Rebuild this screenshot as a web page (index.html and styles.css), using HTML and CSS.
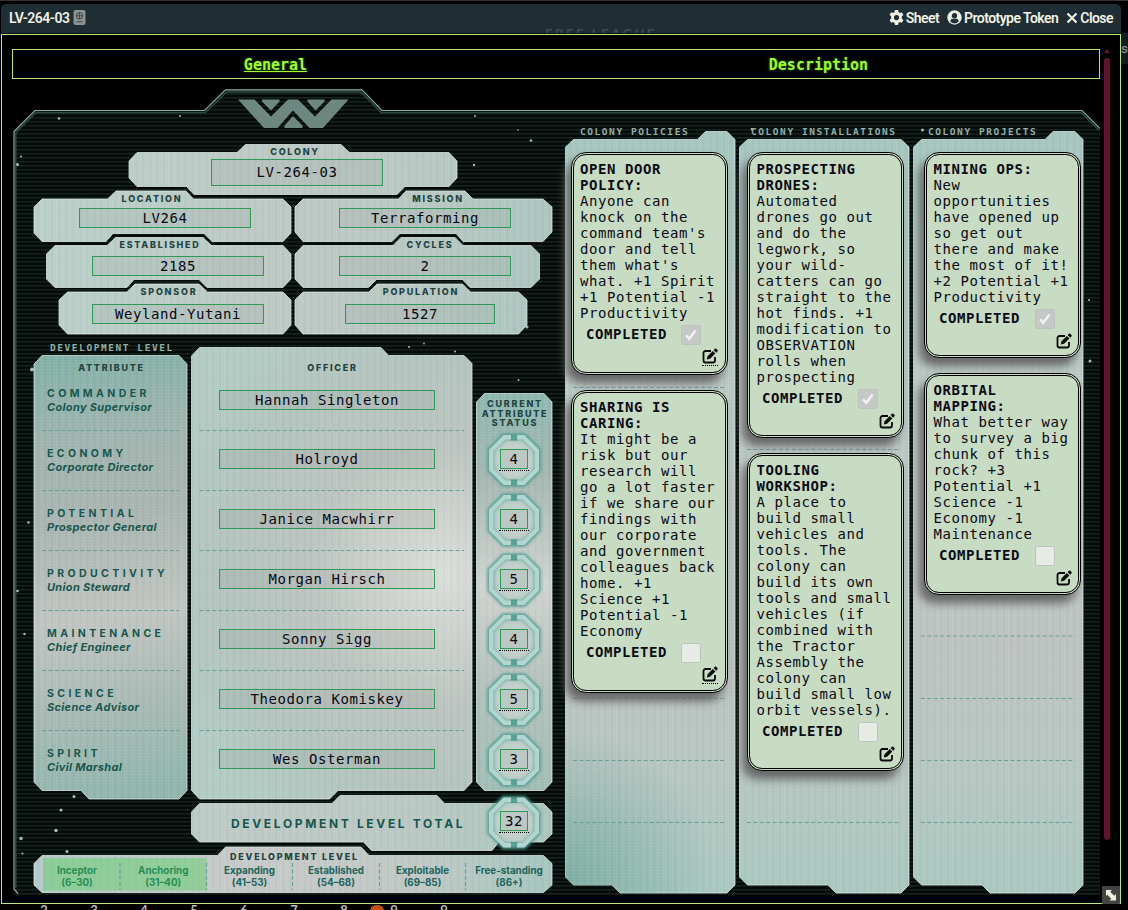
FILE: index.html
```html
<!DOCTYPE html>
<html lang="en">
<head>
<meta charset="utf-8">
<title>LV-264-03</title>
<link rel="stylesheet" href="styles.css">
</head>
<body>
<div class="desktop">
<div class="window">
  <header class="titlebar">
    <span class="title">LV-264-03</span>
    <svg class="passport" viewBox="0 0 12 15" width="13" height="15"><rect width="12" height="15" rx="2" fill="#8d9490"/><g fill="none" stroke="#37434a" stroke-width=".9"><circle cx="6" cy="5.8" r="3.2"/><path d="M2.8 5.8h6.4M6 2.6v6.4M3 11.8h6"/></g></svg>
    <span class="ghost">FREE LEAGUE</span>
    <nav class="controls">
      <span><svg viewBox="0 0 16 16" width="15" height="15"><path fill="#f0f0e0" fill-rule="evenodd" d="M6.3 0h3.4l.4 2.2 1.5.9 2.1-.8 1.7 3-1.7 1.4v2.6l1.7 1.4-1.7 3-2.1-.8-1.5.9-.4 2.2H6.300l-.4-2.2-1.500-.9-2.100.8-1.700-3 1.700-1.400V6.700L.6 5.300l1.700-3 2.100.8 1.500-.9zM8 5.200a2.800 2.800 0 1 0 0 5.600 2.800 2.800 0 0 0 0-5.600z"/></svg>Sheet</span>
      <span><svg viewBox="0 0 16 16" width="15" height="15"><circle cx="8" cy="8" r="7.700" fill="#f0f0e0"/><circle cx="8" cy="6" r="2.800" fill="#1f2d35"/><path d="M3.500 12.300a4.500 3.300 0 0 1 9 0 6 6 0 0 1-9 0z" fill="#1f2d35"/></svg>Prototype Token</span>
      <span><svg viewBox="0 0 12 12" width="12" height="12"><path d="M1.500 1.500l9 9M10.500 1.500l-9 9" stroke="#f0f0e0" stroke-width="2.200"/></svg>Close</span>
    </nav>
  </header>
  <main class="body">
    <div class="scroller">
      <nav class="tabs"><a class="tab active">General</a><a class="tab">Description</a></nav>
      <div class="sheet">
        <svg class="art" viewBox="12 89 1088 806" width="1088" height="806">
          <defs>
            <filter id="glow" x="-50%" y="-50%" width="200%" height="200%"><feGaussianBlur stdDeviation="1.8"/></filter>
            <pattern id="scan" width="8" height="4" patternUnits="userSpaceOnUse"><rect width="8" height="4" fill="#040a08"/><rect y="1" width="8" height="1.500" fill="#15231f"/></pattern>
            <pattern id="weave" width="7" height="3" patternUnits="userSpaceOnUse"><rect width="1" height="3" fill="#fff" opacity=".07"/><rect x="3" width="1" height="3" fill="#245a50" opacity=".04"/><rect x="5" width="1" height="3" fill="#fff" opacity=".05"/><rect width="7" height="1" fill="#fff" opacity=".04"/></pattern>
            <linearGradient id="gFields" gradientUnits="userSpaceOnUse" x1="34" y1="0" x2="552" y2="0"><stop offset="0" stop-color="#b9cfc9"/><stop offset=".45" stop-color="#bcc8c4"/><stop offset=".75" stop-color="#b8c7c2"/><stop offset="1" stop-color="#aac5be"/></linearGradient>
            <linearGradient id="gAttr" gradientUnits="userSpaceOnUse" x1="34" y1="355" x2="100" y2="799"><stop offset="0" stop-color="#7fb0a6"/><stop offset=".2" stop-color="#9fb3ae"/><stop offset=".38" stop-color="#a9b4b0"/><stop offset=".6" stop-color="#c0c4c0"/><stop offset=".8" stop-color="#a8b9b4"/><stop offset="1" stop-color="#8fb5ac"/></linearGradient>
            <radialGradient id="gOff" gradientUnits="userSpaceOnUse" cx="440" cy="575" r="290"><stop offset="0" stop-color="#dbddd9"/><stop offset=".45" stop-color="#bbc3bf"/><stop offset=".75" stop-color="#b3c3be"/><stop offset="1" stop-color="#b1cac3"/></radialGradient>
            <linearGradient id="gStat" gradientUnits="userSpaceOnUse" x1="0" y1="393" x2="0" y2="790"><stop offset="0" stop-color="#8cb8af"/><stop offset=".2" stop-color="#a3b5b0"/><stop offset=".48" stop-color="#cfd2ce"/><stop offset=".75" stop-color="#b3c0bb"/><stop offset="1" stop-color="#9fbdb5"/></linearGradient>
            <linearGradient id="gLevel" gradientUnits="userSpaceOnUse" x1="34" y1="0" x2="552" y2="0"><stop offset="0" stop-color="#b5c8c8"/><stop offset=".4" stop-color="#c6c9c8"/><stop offset=".75" stop-color="#bec7c4"/><stop offset="1" stop-color="#a3c5bd"/></linearGradient>
            <linearGradient id="gCols" gradientUnits="userSpaceOnUse" x1="0" y1="131" x2="0" y2="893"><stop offset="0" stop-color="#a3c5bd"/><stop offset=".3" stop-color="#bac9c5"/><stop offset=".68" stop-color="#bcc2bf"/><stop offset=".85" stop-color="#b6c6c1"/><stop offset="1" stop-color="#a8c7bf"/></linearGradient>
            <radialGradient id="gCorner" gradientUnits="userSpaceOnUse" cx="565" cy="880" r="150"><stop offset="0" stop-color="#5f9c90" stop-opacity=".6"/><stop offset="1" stop-color="#5f9c90" stop-opacity="0"/></radialGradient>
            <radialGradient id="gDial"><stop offset="0" stop-color="#c6d1cd"/><stop offset=".7" stop-color="#c2d0cb"/><stop offset="1" stop-color="#9fc3bb"/></radialGradient>
            <g id="fields">
              <polygon points="129,161 137,152.500 237,152.500 245.500,144.500 341,144.500 349.500,152.500 449,152.500 457,161 457,178 449,186.500 405,186.500 397,194.500 194,194.500 186.500,186.500 137,186.500 129,178"/>
              <polygon points="34,207 42,199 107.500,199 116,191 186,191 193.500,199 283,199 291,207 291,233 283,241.500 212,241.500 204,233.500 113,233.500 106,241.500 42,241.500 34,233"/>
              <polygon points="295,207 303,199 398.500,199 406,191 465,191 473,199 543,199 552,207 552,232 543,241.500 463,241.500 456,233.500 400,233.500 392,241.500 303,241.500 295,232"/>
              <polygon points="46.500,254 55,245.500 107,245.500 115.500,237.500 203,237.500 211.500,245.500 283,245.500 291,254 291,279 283,287.500 207,287.500 199,279.500 134,279.500 127,287.500 55,287.500 46.500,279"/>
              <polygon points="295,254 303,245.500 393,245.500 401,237.500 455,237.500 463,245.500 531,245.500 539.500,254 539.500,279 531,287.500 470,287.500 462.500,279.500 376.500,279.500 368.500,287.500 303,287.500 295,279"/>
              <polygon points="59,300 67.500,292 127,292 135,284 199,284 207.500,292 283,292 291,300 291,325 283,334 67.500,334 59,325"/>
              <polygon points="295,300 303,292 369,292 377,284 462.500,284 470.500,292 518.500,292 527,300 527,325 518.500,334 303,334 295,325"/>
            </g>
            <polygon id="attr" points="34,364 42,355.500 179,355.500 187,364 187,790.500 179,799 89,799 81,790.500 42,790.500 34,782"/>
            <polygon id="off" points="191.500,356 199.500,347.500 381,347.500 388.500,355.500 464,355.500 472,363.500 472,782 464,790.500 338,790.500 329.500,799 199.500,799 191.500,790.500"/>
            <polygon id="stat" points="476.500,402 484.500,393.500 544,393.500 552,402 552,782 544,790.500 484.500,790.500 476.500,782"/>
            <polygon id="total" points="191.500,812 199.500,803.500 332,803.500 340,795.500 437,795.500 444.500,803.500 543.500,803.500 552,812 552,834 543.500,842 499,842 492,850.500 371.500,850.500 363.500,842 199.500,842 191.500,834"/>
            <polygon id="level" points="34,863.500 42,855.500 217.500,855.500 225.500,847 361,847 369,855.500 543.500,855.500 552,863.500 552,885 543.500,892.500 42,892.500 34,885"/>
            <g id="cols">
              <polygon points="565.500,147 573.500,139.500 697.500,139.500 705.500,131.500 727,131.500 735,139.500 735,885 727,893 620,893 612,885 573.500,885 565.500,877"/>
              <polygon points="739.500,147 747.500,139.500 901,139.500 909,147 909,885 901,893 836,893 828,885 747.500,885 739.500,877"/>
              <polygon points="913.500,147 921.500,139.500 1045,139.500 1053,131.500 1075,131.500 1083,139.500 1083,885 1075,893 990,893 982,885 921.500,885 913.500,877"/>
            </g>
            <g id="dial">
              <polygon points="-10,-23.500 10,-23.500 23.500,-10 23.500,10 10,23.500 -10,23.500 -23.500,10 -23.500,-10" fill="url(#gDial)" stroke="#4f9c90" stroke-width="6" filter="url(#glow)"/>
              <path d="M-4,-20.500H4M-4,20.500H4" stroke="#4f9c90" stroke-width="2"/>
              <path d="M-3,-22.800H-9.500L-22.800,-9.500V9.500L-9.500,22.800H-3M3,-22.800H9.500L22.800,-9.500V9.500L9.500,22.800H3" fill="none" stroke="#b1d6cf" stroke-width="4.400"/>
            </g>
          </defs>
          <polygon points="14,895 14,131.500 35,110.500 204.500,110.500 225.500,89.500 362,89.500 382,110.500 1082,110.500 1100,128.500 1100,895" fill="url(#scan)"/>
          <path d="M18,893.500L14,889V131.500L35,110.500H204.500L225.500,89.800H362L382,110.500H1082L1100,128.500" fill="none" stroke="#86aaa2" stroke-width="1.200"/>
          <path d="M15.800,888V132.500L36,112.500H205.500L226.500,92H361L381,112.500H1081L1099,130.500" fill="none" stroke="#2f4a44" stroke-width="1.500"/>
          <g fill="#6d8881">
            <path d="M238,99.500H254.500L271,116.500L288,99.500H298L315,116.500L331.500,99.500H348.500L323,128H309.500L293,110.500L277.500,128H264Z"/>
            <path d="M262,99.500H279.500V101.500L271,110.500L262,101.500ZM307.500,99.500H324.500V101.500L315.500,110.500L307.500,101.500ZM293,116L302.500,125.500V128H284.500V125.500Z"/>
          </g>
          <g fill="#a9bdb8"><circle cx="59" cy="118.500" r="1.300"/><circle cx="180" cy="116" r="1"/><circle cx="21" cy="156.500" r="1"/><circle cx="17.500" cy="164.500" r="1.500"/><circle cx="531" cy="140.500" r="1.300"/><circle cx="474" cy="165" r="1.200"/><circle cx="518" cy="130" r=".8"/><circle cx="475" cy="116" r="1"/><circle cx="527" cy="327" r="1.500"/><circle cx="409" cy="347" r="1"/><circle cx="455" cy="351.500" r="1"/><circle cx="424" cy="343.500" r=".9"/><circle cx="518.500" cy="380" r="1"/><circle cx="32" cy="369.500" r="2"/><circle cx="28.500" cy="522.500" r="1.200"/><circle cx="17.500" cy="591" r="1.300"/><circle cx="24.500" cy="634" r="1.200"/><circle cx="74" cy="796.500" r="1.500"/><circle cx="61" cy="810" r="1.500"/><circle cx="56" cy="830.500" r="1.700"/><circle cx="21" cy="838.500" r="1.700"/><circle cx="67" cy="851.500" r="1.500"/><circle cx="22.500" cy="853.500" r="1"/><circle cx="1090" cy="361" r="1.500"/><circle cx="1089" cy="300" r="1"/><circle cx="922.500" cy="130" r="1.500"/><circle cx="752" cy="129" r="1.300"/></g>
          <g stroke="#dcebe7" stroke-opacity=".75" stroke-width="1">
            <use href="#fields" fill="url(#gFields)"/><use href="#attr" fill="url(#gAttr)"/><use href="#off" fill="url(#gOff)"/><use href="#stat" fill="url(#gStat)"/><use href="#total" fill="url(#gFields)"/><use href="#level" fill="url(#gLevel)"/><use href="#cols" fill="url(#gCols)"/>
          </g>
          <use href="#cols" fill="url(#gCorner)"/>
          <g fill="url(#weave)"><use href="#fields"/><use href="#attr"/><use href="#off"/><use href="#stat"/><use href="#total"/><use href="#level"/><use href="#cols"/></g>
          <rect x="43" y="858" width="163.500" height="32.500" fill="#5fd06a" opacity=".5"/>
          <g stroke="#66a098" stroke-width="1.200" stroke-dasharray="4 2.400" fill="none">
            <path d="M42,430.500H179M42,490.500H179M42,550.500H179M42,610.500H179M42,670.500H179M42,730.500H179"/>
            <path d="M199.500,430.500H464M199.500,490.500H464M199.500,550.500H464M199.500,610.500H464M199.500,670.500H464M199.500,730.500H464"/>
            <path d="M573,387.500H726M573,698.500H726M573,760.500H726M573,822.500H726M747,449.500H901M747,822.500H901M921,636H1075M921,698.500H1075M921,760.500H1075M921,822.500H1075"/>
            <path d="M120,863V890M206.500,863V890M292.500,863V890M379.500,863V890M465.500,863V890"/>
          </g>
          <use href="#dial" x="514" y="460"/><use href="#dial" x="514" y="520"/><use href="#dial" x="514" y="580"/><use href="#dial" x="514" y="640"/><use href="#dial" x="514" y="700"/><use href="#dial" x="514" y="760"/><use href="#dial" x="514" y="822.500"/>
        </svg>
        <div class="content">
          <section class="left">
            <div class="field colony"><label>COLONY</label><div class="input">LV-264-03</div></div>
            <div class="pair">
              <div class="field location"><label>LOCATION</label><div class="input">LV264</div></div>
              <div class="field mission"><label>MISSION</label><div class="input">Terraforming</div></div>
            </div>
            <div class="pair">
              <div class="field established"><label>ESTABLISHED</label><div class="input">2185</div></div>
              <div class="field cycles"><label>CYCLES</label><div class="input">2</div></div>
            </div>
            <div class="pair last">
              <div class="field sponsor"><label>SPONSOR</label><div class="input">Weyland-Yutani</div></div>
              <div class="field population"><label>POPULATION</label><div class="input">1527</div></div>
            </div>
            <h3 class="dev-title">DEVELOPMENT LEVEL</h3>
            <div class="board">
              <div class="attributes">
                <h4>ATTRIBUTE</h4>
                <div class="attribute"><b>COMMANDER</b><i>Colony Supervisor</i></div>
                <div class="attribute"><b>ECONOMY</b><i>Corporate Director</i></div>
                <div class="attribute"><b>POTENTIAL</b><i>Prospector General</i></div>
                <div class="attribute"><b>PRODUCTIVITY</b><i>Union Steward</i></div>
                <div class="attribute"><b>MAINTENANCE</b><i>Chief Engineer</i></div>
                <div class="attribute"><b>SCIENCE</b><i>Science Advisor</i></div>
                <div class="attribute"><b>SPIRIT</b><i>Civil Marshal</i></div>
              </div>
              <div class="officers">
                <h4>OFFICER</h4>
                <div class="input">Hannah Singleton</div><div class="input">Holroyd</div><div class="input">Janice Macwhirr</div><div class="input">Morgan Hirsch</div><div class="input">Sonny Sigg</div><div class="input">Theodora Komiskey</div><div class="input">Wes Osterman</div>
              </div>
              <div class="statuses">
                <h4>CURRENT<br>ATTRIBUTE<br>STATUS</h4>
                <div class="score"><div class="input">4</div></div><div class="score"><div class="input">4</div></div><div class="score"><div class="input">5</div></div><div class="score"><div class="input">4</div></div><div class="score"><div class="input">5</div></div><div class="score"><div class="input">3</div></div>
              </div>
            </div>
            <div class="total"><b>DEVELOPMENT LEVEL TOTAL</b><div class="score"><div class="input">32</div></div></div>
            <h4 class="level-title">DEVELOPMENT LEVEL</h4>
            <div class="levels">
              <span class="on first">Inceptor<br>(6–30)</span><span class="on">Anchoring<br>(31–40)</span><span>Expanding<br>(41–53)</span><span>Established<br>(54–68)</span><span>Exploitable<br>(69–85)</span><span>Free-standing<br>(86+)</span>
            </div>
          </section>
          <section class="column">
            <h3>COLONY POLICIES</h3>
            <article class="card dotted">
              <p><b>OPEN DOOR<br>POLICY:</b><br>Anyone can<br>knock on the<br>command team's<br>door and tell<br>them what's<br>what. +1 Spirit<br>+1 Potential -1<br>Productivity</p>
              <div class="done"><b>COMPLETED</b><span class="check on"><svg viewBox="0 0 20 20"><path d="M4.500 10.500l3.500 3.700L15 5"/></svg></span></div>
              <svg class="edit" viewBox="0 0 16 16"><path d="M9 3H3.500A2 2 0 0 0 1.500 5v7.500a2 2 0 0 0 2 2H11a2 2 0 0 0 2-2V9"/><path class="nib" d="M5.500 8.200l5.300-5.300 2.600 2.600-5.300 5.300-3.300.8zM11.600 2.100L13 .7q.7-.5 1.400.1l1.100 1.100q.6.700 0 1.400l-1.300 1.400z"/></svg>
            </article>
            <article class="card dotted">
              <p><b>SHARING IS<br>CARING:</b><br>It might be a<br>risk but our<br>research will<br>go a lot faster<br>if we share our<br>findings with<br>our corporate<br>and government<br>colleagues back<br>home. +1<br>Science +1<br>Potential -1<br>Economy</p>
              <div class="done"><b>COMPLETED</b><span class="check"></span></div>
              <svg class="edit" viewBox="0 0 16 16"><path d="M9 3H3.500A2 2 0 0 0 1.500 5v7.500a2 2 0 0 0 2 2H11a2 2 0 0 0 2-2V9"/><path class="nib" d="M5.500 8.200l5.300-5.300 2.600 2.600-5.300 5.300-3.300.8zM11.600 2.100L13 .7q.7-.5 1.400.1l1.100 1.100q.6.700 0 1.400l-1.300 1.400z"/></svg>
            </article>
          </section>
          <section class="column installations">
            <h3>COLONY INSTALLATIONS</h3>
            <article class="card">
              <p><b>PROSPECTING<br>DRONES:</b><br>Automated<br>drones go out<br>and do the<br>legwork, so<br>your wild-<br>catters can go<br>straight to the<br>hot finds. +1<br>modification to<br>OBSERVATION<br>rolls when<br>prospecting</p>
              <div class="done"><b>COMPLETED</b><span class="check on"><svg viewBox="0 0 20 20"><path d="M4.500 10.500l3.500 3.700L15 5"/></svg></span></div>
              <svg class="edit" viewBox="0 0 16 16"><path d="M9 3H3.500A2 2 0 0 0 1.500 5v7.500a2 2 0 0 0 2 2H11a2 2 0 0 0 2-2V9"/><path class="nib" d="M5.500 8.200l5.300-5.300 2.600 2.600-5.300 5.300-3.300.8zM11.600 2.100L13 .7q.7-.5 1.400.1l1.100 1.100q.6.700 0 1.400l-1.300 1.400z"/></svg>
            </article>
            <article class="card">
              <p><b>TOOLING<br>WORKSHOP:</b><br>A place to<br>build small<br>vehicles and<br>tools. The<br>colony can<br>build its own<br>tools and small<br>vehicles (if<br>combined with<br>the Tractor<br>Assembly the<br>colony can<br>build small low<br>orbit vessels).</p>
              <div class="done"><b>COMPLETED</b><span class="check"></span></div>
              <svg class="edit" viewBox="0 0 16 16"><path d="M9 3H3.500A2 2 0 0 0 1.500 5v7.500a2 2 0 0 0 2 2H11a2 2 0 0 0 2-2V9"/><path class="nib" d="M5.500 8.200l5.300-5.300 2.600 2.600-5.300 5.300-3.300.8zM11.600 2.100L13 .7q.7-.5 1.400.1l1.100 1.100q.6.700 0 1.400l-1.300 1.400z"/></svg>
            </article>
          </section>
          <section class="column projects">
            <h3>COLONY PROJECTS</h3>
            <article class="card">
              <p><b>MINING OPS:</b><br>New<br>opportunities<br>have opened up<br>so get out<br>there and make<br>the most of it!<br>+2 Potential +1<br>Productivity</p>
              <div class="done"><b>COMPLETED</b><span class="check on"><svg viewBox="0 0 20 20"><path d="M4.500 10.500l3.500 3.700L15 5"/></svg></span></div>
              <svg class="edit" viewBox="0 0 16 16"><path d="M9 3H3.500A2 2 0 0 0 1.500 5v7.500a2 2 0 0 0 2 2H11a2 2 0 0 0 2-2V9"/><path class="nib" d="M5.500 8.200l5.300-5.300 2.600 2.600-5.300 5.300-3.300.8zM11.600 2.100L13 .7q.7-.5 1.400.1l1.100 1.100q.6.700 0 1.400l-1.300 1.400z"/></svg>
            </article>
            <article class="card">
              <p><b>ORBITAL<br>MAPPING:</b><br>What better way<br>to survey a big<br>chunk of this<br>rock? +3<br>Potential +1<br>Science -1<br>Economy -1<br>Maintenance</p>
              <div class="done"><b>COMPLETED</b><span class="check"></span></div>
              <svg class="edit" viewBox="0 0 16 16"><path d="M9 3H3.500A2 2 0 0 0 1.500 5v7.500a2 2 0 0 0 2 2H11a2 2 0 0 0 2-2V9"/><path class="nib" d="M5.500 8.200l5.300-5.300 2.600 2.600-5.300 5.300-3.300.8zM11.600 2.100L13 .7q.7-.5 1.400.1l1.100 1.100q.6.700 0 1.400l-1.300 1.400z"/></svg>
            </article>
          </section>
        </div>
      </div>
    </div>
    <div class="scrollbar"><span class="arrow"></span><span class="thumb"></span></div>
  </main>
</div>
<div class="edge"><span>se</span></div>
<svg class="resize" viewBox="0 0 18 18" width="18" height="18"><rect width="18" height="18" rx="1" fill="#444"/><path d="M4 4h6L8.200 5.800l4 4L14 8v6.500H7.500l1.800-1.800-4-4L4 10z" fill="#f0f0e0"/></svg>
<footer class="hotbar"><span>2</span><span>3</span><span>4</span><span>5</span><span>6</span><span>7</span><span>8</span><span class="macro">9</span><span>9</span></footer>
</div>
</body>
</html>
```
FILE: styles.css
```css
* { box-sizing: border-box; }
body { margin: 0; background: #000; overflow: hidden; }
h3, h4, p { margin: 0; font-weight: inherit; }
.desktop { position: relative; width: 1128px; height: 910px; overflow: hidden; display: grid; grid-template: 900px 6px / 1121px 7px; padding-top: 4px; background: linear-gradient(#333 0 1px, #000 1px); }
.window { padding-left: 1px; display: flex; flex-direction: column; }
.titlebar { height: 30px; display: flex; align-items: center; padding: 0 8px 2px; background: #1f2d35; border-radius: 5px 5px 0 0; border-bottom: 1px solid #0a0f12; font: 600 14px Roboto, sans-serif; color: #f0f0e0; overflow: hidden; }
.title { letter-spacing: -.5px; width: 60px; white-space: nowrap; }
.passport { margin-left: 4px; }
.ghost { margin-left: 459px; align-self: flex-end; height: 6px; font: 700 13px/18px Lato, sans-serif; letter-spacing: 2.600px; color: #3f4d54; white-space: nowrap; }
.controls { margin-left: auto; display: flex; gap: 8px; letter-spacing: -.55px; }
.controls span { display: flex; align-items: center; gap: 2px; white-space: nowrap; }
.body { flex: 1; border: 1px solid #b5e878; padding: 14px 0 0 10px; display: flex; background: #000; min-height: 0; }
.scroller { width: 1088px; }
.tabs { height: 30px; border: 1px solid #b5e878; display: flex; justify-content: space-around; font: 700 15px/30px "DejaVu Sans Mono", monospace; color: #9cfb2a; }
.tab { text-shadow: 0 0 3px #376b00; }
.tab.active { text-decoration: underline; }
.sheet { margin-top: 10px; display: grid; height: 806px; }
.art, .content { grid-area: 1 / 1; }
.content { display: grid; grid-template-columns: 545px 174px 174px 174px; }
.input { border: 1px solid #2f9a55; background: rgba(60, 70, 70, .06); height: 20px; text-align: center; color: #080812; font: 14px/19px "DejaVu Sans Mono", monospace; letter-spacing: .57px; white-space: nowrap; }
label, h4 { display: block; padding-left: 2px; font: 800 9px/15px Inter, sans-serif; height: 14px; letter-spacing: 1.750px; color: #1f4440; text-align: center; white-space: nowrap; }
.left { padding: 55px 0 0 22px; }
.colony { height: 47px; width: 326px; margin-left: 95px; }
.colony label { width: 100px; margin-left: 115px; }
.colony .input { width: 172px; height: 27px; line-height: 25px; margin: 1px 0 0 82px; }
.pair { display: grid; grid-template-columns: 261px 257px; height: 46px; }
.pair:nth-child(3) { height: 47px; }
.pair.last { height: 56px; }
.location label { width: 120px; margin-left: 57px; }
.mission label { width: 120px; margin-left: 82px; }
.established label { width: 120px; margin-left: 65px; }
.cycles label { width: 120px; margin-left: 74px; }
.sponsor label { width: 120px; margin-left: 74px; }
.population label { width: 120px; margin-left: 65px; }
.pair .input { width: 172px; margin: 3px 0 0 45px; }
.mission .input, .cycles .input { margin-left: 44px; }
.established .input, .cycles .input { margin-top: 5px; }
.sponsor .input, .population .input { margin-top: 6px; }
.established .input, .sponsor .input { margin-left: 58px; }
.population .input { width: 150px; margin-left: 50px; }
.dev-title, .column h3 { font: 700 9.500px/15px "DejaVu Sans Mono", monospace; letter-spacing: 1.560px; color: #8fb0a8; white-space: nowrap; }
.dev-title { height: 14px; padding-left: 16px; }
.board { display: grid; grid-template-columns: 157px 285px 76px; height: 441px; margin-top: 1px; }
.attributes { padding-top: 5px; }
.attributes h4 { width: 153px; }
.attribute { height: 60px; padding: 0 0 0 13px; color: #17574f; white-space: nowrap; }
.attributes h4 + .attribute { margin-top: 13px; }
.attribute b { display: block; font: 700 10.500px/14px Inter, sans-serif; letter-spacing: 3.400px; }
.attribute i { display: block; font: italic 700 11px/13px Inter, sans-serif; letter-spacing: .32px; }
.officers { padding-top: 5px; }
.officers h4 { width: 281px; }
.officers .input { width: 216px; margin: 0 0 40px 28px; }
.officers h4 + .input { margin: 16px 0 39px 28px; }
.statuses { padding-top: 43px; }
.statuses h4 { line-height: 9.700px; height: 46px; padding-top: 1px; }
.score { width: 30px; height: 22px; margin: 5px 0 38px 23px; border-bottom: 1px dotted #000; padding: 0 1px; }
.statuses .score { margin-top: 0; }
.statuses h4 + .score { margin-top: 5px; }
.total { display: flex; height: 52px; padding: 15px 0 0 197px; color: #17574f; }
.total b { font: 700 12px/25px Inter, sans-serif; letter-spacing: 2.650px; width: 268px; white-space: nowrap; }
.total .score { margin: 0; }
.level-title { width: 130px; margin: 1px 0 0 194px; }
.levels { display: grid; grid-template-columns: 77px 86.500px 86px 87px 86px 87px; margin: 2px 0 0 9px; text-align: center; font: 700 9.800px/12px Inter, sans-serif; color: #20645b; }
.levels .on { color: #288e54; }
.levels .first { padding-right: 9px; }
.column { display: flex; flex-direction: column; padding-left: 15px; }
.column h3 { height: 63px; padding-top: 35px; margin-left: 8px; }
.installations { padding-left: 17px; }
.projects { padding-left: 20px; }
.installations h3, .projects h3 { margin-left: 3px; }
.card { width: 157px; margin: 0 0 15px -1px; border: 3px double #000; border-radius: 15px; background: #c8dbc3; padding: 6px 6px 0 6px; box-shadow: -5px 8px 10px #666; color: #0b0b16; font: 14px/16px "DejaVu Sans Mono", monospace; letter-spacing: .57px; }
.card p { white-space: nowrap; }
.installations .card p, .projects .card p { padding-left: .5px; }
.done { display: flex; padding: 4px 0 0 6px; justify-content: space-between; width: 121px; }
.installations .done, .projects .done { width: 122px; }
.done b { line-height: 19px; }
.check { width: 20px; height: 20px; border: 1px solid #bfc3bf; border-radius: 2px; background: #e6ebe5; }
.check.on { background: #c6c8c6; }
.check svg { display: block; width: 18px; height: 18px; fill: none; stroke: #f2f2f2; stroke-width: 2.700; }
.edit { display: block; width: 16px; height: 17px; margin: 3px 0 6px 122px; padding-bottom: 1px; fill: none; stroke: #0b0b0b; stroke-width: 1.800; }
.installations .edit, .projects .edit { margin: 4px 0 5px 123px; }
.edit .nib { fill: #0b0b0b; stroke: none; }
.dotted .edit { height: 18px; border-bottom: 1px dotted #000; }
.scrollbar { margin-left: 3px; width: 7px; display: flex; flex-direction: column; align-items: center; }
.arrow { border: 3px solid transparent; border-bottom: 4px solid #65122b; border-top: 0; margin-bottom: 5px; }
.thumb { width: 6px; height: 782px; border-radius: 3px; background: #65122b; }
.edge { padding-top: 29px; overflow: hidden; }
.edge span { display: block; height: 31px; background: #141b20; color: #999; font: 13px/31px Roboto, sans-serif; letter-spacing: -.5px; margin-right: -8px; }
.resize { position: absolute; left: 1102px; top: 886px; }
.hotbar { grid-column: 1 / -1; display: flex; padding-left: 19px; height: 6px; overflow: hidden; color: #bbb; font: 700 13px/12px Lato, sans-serif; }
.hotbar span { width: 50px; text-align: center; }
.hotbar .macro { background: radial-gradient(ellipse 11px 8px at 8px 6px, #c4500f 60%, transparent 62%); }
```
